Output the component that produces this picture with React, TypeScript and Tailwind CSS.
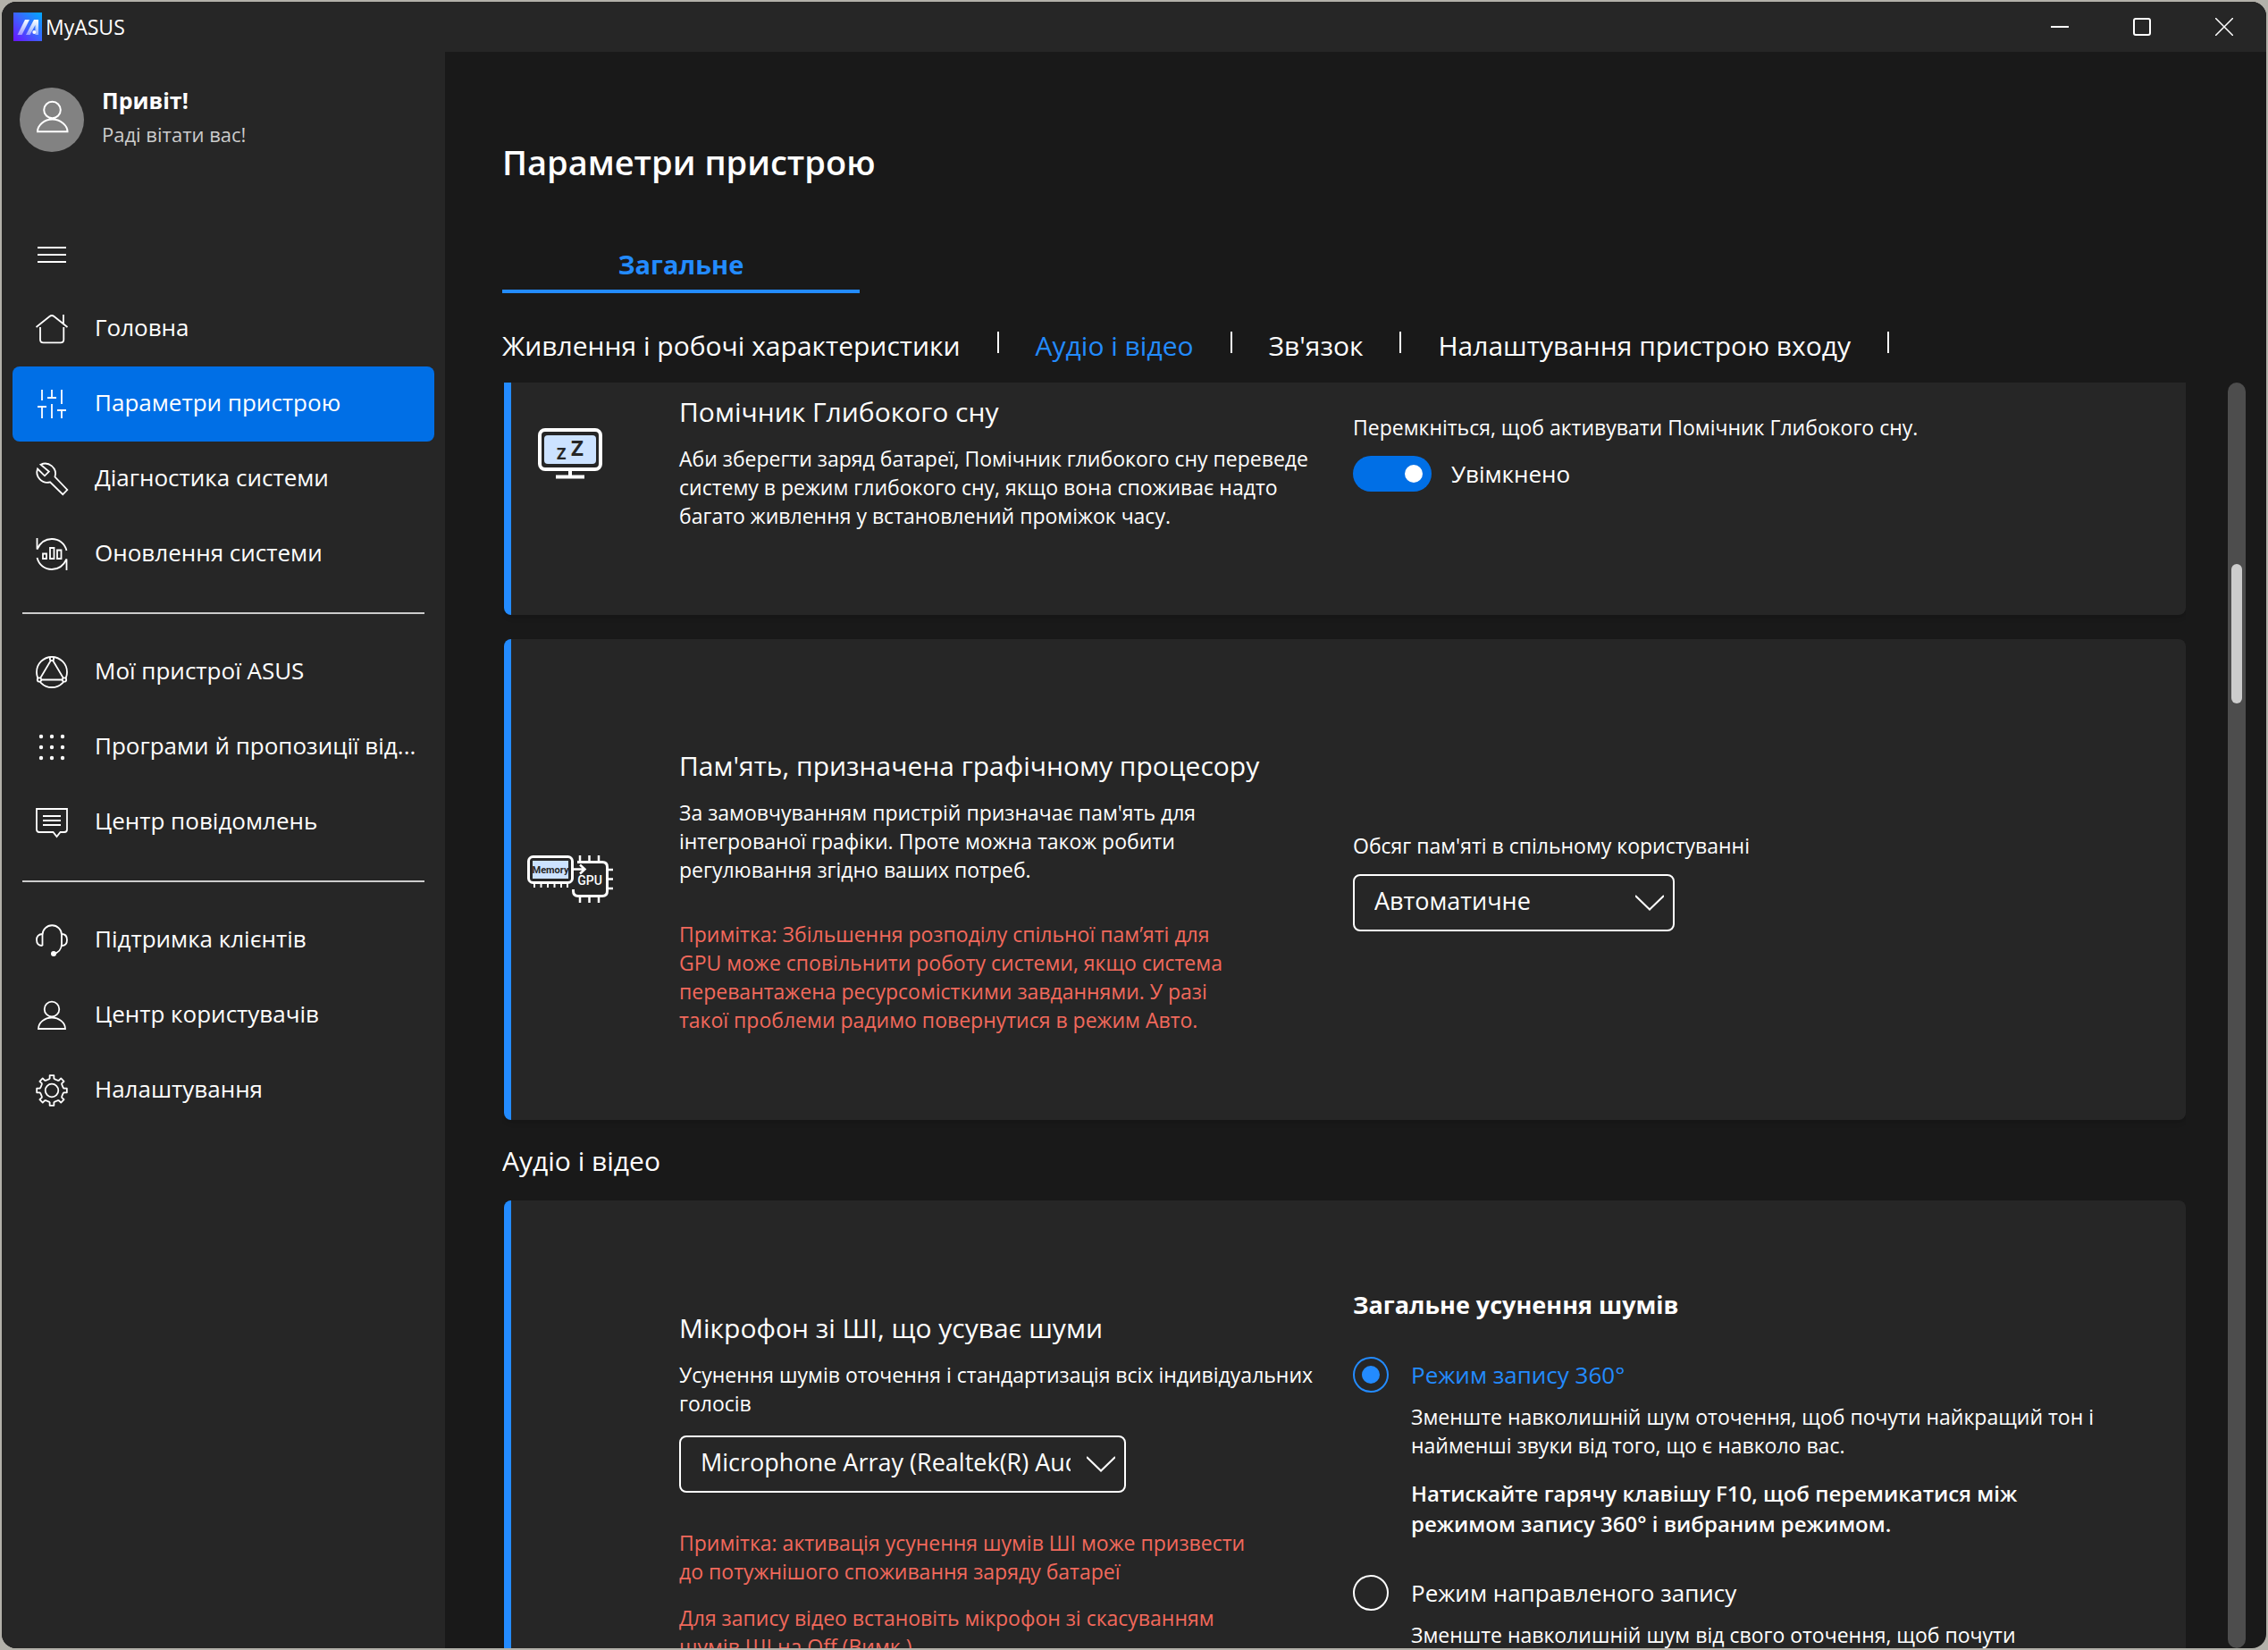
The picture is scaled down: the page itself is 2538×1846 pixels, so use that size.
import { useState } from 'react';
import type { ReactNode } from 'react';

const Icon = ({ children }: { children: ReactNode }) => (
  <svg
    viewBox="0 0 36 36"
    className="w-9 h-9 shrink-0 overflow-visible"
    fill="none"
    stroke="currentColor"
    strokeWidth="1.8"
    aria-hidden="true"
  >
    {children}
  </svg>
);

// 8 teeth, built around the 18,18 center
const gearPath = () => {
  const points: string[] = [];
  for (let i = 0; i < 8; i++) {
    const steps = [[-15, 13], [-10, 13.6], [-8, 17], [8, 17], [10, 13.6], [15, 13]];
    steps.forEach(([offset, r]) => {
      const a = ((i * 45 + offset - 90) * Math.PI) / 180;
      points.push(`${(18 + r * Math.cos(a)).toFixed(2)} ${(18 + r * Math.sin(a)).toFixed(2)}`);
    });
  }
  return `M${points.join('L')}Z`;
};

const HomeIcon = () => (
  <Icon>
    <path d="M.5 16 15.5 4Q18 2 20.5 4L35.5 16M31 2v11M5 16v14q0 3.3 3.5 3.3h19.3q3.5 0 3.5-3.3V16" />
  </Icon>
);

const SlidersIcon = () => (
  <Icon>
    <path d="M7 2v12M2 21h10M7 21v13M18 2v9M13 11h10M18 18v16M29 2v16M24 25h10M29 25v9" />
  </Icon>
);

const WrenchIcon = () => (
  <Icon>
    <path d="M5.5 1.8A11.5 11.5 0 0 1 21.5 15.5L35.3 30 30.3 35.2 16 21.3A11.5 11.5 0 0 1 2 6.5L10 14.3 14.8 9.6Z" />
  </Icon>
);

const UpdateIcon = () => (
  <Icon>
    <path d="M1.5 0v12.5C5 5 11 1 18 1c8 0 14.5 5 16.5 13M34.5 36V23.5C31 31 25 35 18 35 10 35 3.5 30 1.5 22" />
    <path d="M8 17.5h4V23H8zM16 11h4.5v12H16zM24 13.5h4.5V23H24z" />
  </Icon>
);

const DevicesIcon = () => (
  <Icon>
    <circle cx="18" cy="18" r="17" />
    <path d="M18 3 4 26.5h28Z" />
    <g className="fill-[#262626]">
      <circle cx="18" cy="3" r="2.2" />
      <circle cx="4" cy="26.5" r="2.2" />
      <circle cx="32" cy="26.5" r="2.2" />
    </g>
  </Icon>
);

const DotsIcon = () => (
  <Icon>
    <g fill="currentColor" stroke="none">
      {[6, 18, 30].map((y) => [6, 18, 30].map((x) => <circle key={`${x}-${y}`} cx={x} cy={y} r="2.2" />))}
    </g>
  </Icon>
);

const MessageIcon = () => (
  <Icon>
    <path d="M1 3h34v23q0 3-3 3h-4.5l-4 5-4-5H4q-3 0-3-3ZM8 11h20M8 16h20M8 21h20" />
  </Icon>
);

const HeadsetIcon = () => (
  <Icon>
    <path d="M7.5 24V12A10.75 10.75 0 0 1 29 12V22C29 28 25 32 20 33" />
    <path d="M7.5 11C3 11 1 14 1 17.5S3 24 7.5 24M29 11c4.5 0 6 3 6 6.5S33.5 24 29 24" />
    <circle cx="20" cy="33" r="3" fill="currentColor" stroke="none" />
  </Icon>
);

const UserIcon = () => (
  <Icon>
    <circle cx="18" cy="11" r="8.3" />
    <path d="M3 33C3 26 10 20.5 18 20.5S33 26 33 33Z" />
  </Icon>
);

const GearIcon = () => (
  <Icon>
    <path d={gearPath()} strokeLinejoin="round" />
    <circle cx="18" cy="18" r="7.3" />
  </Icon>
);

const SleepIcon = () => (
  <svg viewBox="0 0 72 57" className="w-[72px] h-[57px]" fill="none" aria-hidden="true">
    <rect x="2" y="2" width="68" height="44" rx="6" stroke="#fff" strokeWidth="4" />
    <rect x="7" y="8" width="58" height="32" rx="4" fill="#cce2ff" />
    <path d="M36 47v6M20 54.5h32" stroke="#fff" strokeWidth="4" />
    <g fontWeight="700" fill="#262626" fontFamily="Open Sans, sans-serif">
      <text x="21" y="35" fontSize="18">Z</text>
      <text x="37" y="31" fontSize="24">Z</text>
    </g>
  </svg>
);

const MemoryIcon = () => (
  <svg viewBox="0 0 96 54" className="w-24 h-[54px]" fill="none" stroke="#fff" strokeWidth="3" aria-hidden="true">
    <rect x="1.5" y="1.5" width="49" height="29" rx="5" />
    <rect x="6" y="6" width="40" height="20" fill="#cce2ff" stroke="none" />
    <path d="M8 31v5M15.5 31v5M23 31v5M30.5 31v5M38 31v5M45 31v5" strokeWidth="2" />
    <path d="M56 7.5H84q5.5 0 5.5 5.5V40q0 5.5-5.5 5.5H57q-5.5 0-5.5-5.5V38" />
    <path d="M59 0v7M69.5 0v7M80 0v7M59 46v7M69.5 46v7M80 46v7M90 16h6M90 26.5h6M90 37h6" strokeWidth="2.5" />
    <path d="M51 15.5H64M59 10.5l5.5 5-5.5 5" strokeWidth="2.5" />
    <g stroke="none" fontFamily="Roboto, sans-serif">
      <text x="26" y="20" fontSize="11" fontWeight="700" textAnchor="middle" fill="#262626">Memory</text>
      <text x="70" y="33" fontSize="14" fontWeight="500" textAnchor="middle" fill="#fff">GPU</text>
    </g>
  </svg>
);

const navGroups = [
  [
    { label: 'Головна', icon: <HomeIcon /> },
    { label: 'Параметри пристрою', icon: <SlidersIcon /> },
    { label: 'Діагностика системи', icon: <WrenchIcon /> },
    { label: 'Оновлення системи', icon: <UpdateIcon /> },
  ],
  [
    { label: 'Мої пристрої ASUS', icon: <DevicesIcon /> },
    { label: 'Програми й пропозиції від...', icon: <DotsIcon /> },
    { label: 'Центр повідомлень', icon: <MessageIcon /> },
  ],
  [
    { label: 'Підтримка клієнтів', icon: <HeadsetIcon /> },
    { label: 'Центр користувачів', icon: <UserIcon /> },
    { label: 'Налаштування', icon: <GearIcon /> },
  ],
];

const sections = ['Живлення і робочі характеристики', 'Аудіо і відео', "Зв'язок", 'Налаштування пристрою входу'];

const TitleBar = () => (
  <header className="h-14 shrink-0 flex items-center justify-between bg-[#262626]">
    <div className="flex items-center gap-1 pl-[13px]">
      <svg viewBox="0 0 32 32" className="w-8 h-8" aria-hidden="true">
        <defs>
          <linearGradient id="logo-bg" x1="0" y1="1" x2="1" y2="0">
            <stop offset="0" stopColor="#6a12ff" />
            <stop offset=".5" stopColor="#3d63ff" />
            <stop offset="1" stopColor="#00aaff" />
          </linearGradient>
          <linearGradient id="logo-stroke" x1="0" y1="0" x2="0" y2="1">
            <stop offset="0" stopColor="#fff" />
            <stop offset="1" stopColor="#fff" stopOpacity=".45" />
          </linearGradient>
        </defs>
        <path d="M0 0h32v32H0z" fill="url(#logo-bg)" />
        <path d="M13 8h5L9.5 25H4.5Z" fill="url(#logo-stroke)" />
        <path d="M23 8h5v17h-3.5V14L18.5 25H14Z" fill="url(#logo-stroke)" />
        <circle cx="23.3" cy="22" r="2" fill="#fff" />
      </svg>
      <span className="text-[23px] leading-8">MyASUS</span>
    </div>
    <div className="flex h-full pr-px">
      <button aria-label="Згорнути" className="w-[92px] h-full flex items-center justify-center">
        <svg viewBox="0 0 20 20" className="w-5 h-5" fill="none" stroke="#fff" strokeWidth="2"><path d="M0 10h20" /></svg>
      </button>
      <button aria-label="Розгорнути" className="w-[92px] h-full flex items-center justify-center">
        <svg viewBox="0 0 20 20" className="w-5 h-5" fill="none" stroke="#fff" strokeWidth="2"><rect x="1" y="1" width="18" height="18" rx="2" /></svg>
      </button>
      <button aria-label="Закрити" className="w-[92px] h-full flex items-center justify-center">
        <svg viewBox="0 0 20 20" className="w-5 h-5" fill="none" stroke="#fff" strokeWidth="1.5"><path d="M0 0l20 20M20 0 0 20" /></svg>
      </button>
    </div>
  </header>
);

const Sidebar = () => (
  <aside className="w-[496px] shrink-0 bg-[#262626]">
    <div className="flex items-start gap-5 pt-10 pl-5">
      <div className="w-[72px] h-[72px] rounded-full bg-[#828282]">
        <svg viewBox="0 0 72 72" fill="none" stroke="#fff" strokeWidth="2" aria-hidden="true">
          <circle cx="36.5" cy="25" r="9.3" />
          <path d="M20 49.3C20 42 27.5 35.5 36.5 35.5S53.5 42 53.5 49.3Z" />
        </svg>
      </div>
      <div>
        <p className="text-[25px] leading-7 font-bold">Привіт!</p>
        <p className="text-[22px] leading-[48px] text-[#cccccc]">Раді вітати вас!</p>
      </div>
    </div>

    <button aria-label="Меню" className="block ml-10 mt-[94px]">
      <svg viewBox="0 0 32 34" className="w-8 h-[34px]" stroke="#fff" strokeWidth="2"><path d="M0 9h32M0 17h32M0 25h32" /></svg>
    </button>

    <nav className="mt-6">
      {navGroups.map((group, i) => (
        <div key={i}>
          {i > 0 && <hr className="my-[23px] mx-[23px] border-0 h-[2px] bg-[#cccccc]" />}
          {group.map((item) => (
            <a
              key={item.label}
              href="#"
              className={`flex items-center gap-[30px] h-[84px] mx-3 pl-[26px] pr-2 rounded-lg text-[26px] leading-9 whitespace-nowrap ${
                item.label === 'Параметри пристрою' ? 'bg-[#006fe6]' : ''
              }`}
            >
              {item.icon}
              <span className="pb-1">{item.label}</span>
            </a>
          ))}
        </div>
      ))}
    </nav>
  </aside>
);

const Card = ({ icon, className, children }: { icon?: ReactNode; className?: string; children: ReactNode }) => (
  <section className={`flex bg-[#262626] border-l-8 border-[#238bff] shadow-md ${className}`}>
    <div className="w-[132px] mr-14 shrink-0 flex justify-center">{icon}</div>
    {children}
  </section>
);

const Select = ({ id, label, options, className }: { id: string; label?: string; options: string[]; className: string }) => (
  <div className={`relative ${className}`}>
    <select
      id={id}
      aria-label={label}
      className="appearance-none w-full h-16 pl-[22px] pr-[60px] pb-1 rounded-lg border-2 border-white bg-[#262626] text-[27px] outline-none"
    >
      {options.map((o) => (
        <option key={o}>{o}</option>
      ))}
    </select>
    <svg
      viewBox="0 0 32 18"
      className="absolute right-3 top-[23px] w-8 h-[18px] pointer-events-none"
      fill="none"
      stroke="#fff"
      strokeWidth="2"
      aria-hidden="true"
    >
      <path d="M0 1l16 15.5L32 1" />
    </svg>
  </div>
);

const App = () => {
  const [deepSleep, setDeepSleep] = useState(true);
  const [mode, setMode] = useState('360');

  const radioClass =
    "appearance-none w-10 h-10 shrink-0 rounded-full border-2 border-white grid place-content-center checked:border-[#238bff] checked:before:content-[''] checked:before:w-5 checked:before:h-5 checked:before:rounded-full checked:before:bg-[#238bff]";

  return (
    <div className="h-screen p-[2px] bg-[#b3b1aa] text-white font-['Open_Sans','Noto_Sans',sans-serif]">
      <div className="h-full flex flex-col rounded-2xl overflow-hidden bg-[#191919]">
        <TitleBar />

        <div className="flex flex-1 min-h-0">
          <Sidebar />

          <main className="flex-1 min-w-0 flex flex-col pl-16 pr-[23px] pt-[97px]">
            <h1 className="text-[38px] leading-[52px] font-semibold">Параметри пристрою</h1>

            <div role="tablist" className="mt-[69px]">
              <button
                role="tab"
                aria-selected="true"
                className="block w-[400px] h-[52px] pb-2 border-b-4 border-[#238bff] text-[#238bff] text-[29px] leading-10 font-bold"
              >
                Загальне
              </button>
            </div>

            <div className="flex mt-[39px] text-[30px] leading-10 whitespace-nowrap">
              {sections.map((s) => (
                <div key={s} className="flex">
                  <a href="#" className={s === 'Аудіо і відео' ? 'text-[#238bff]' : ''}>{s}</a>
                  <span className="w-[2px] h-6 mt-1 mx-[41px] bg-white" />
                </div>
              ))}
            </div>

            <div className="flex flex-1 min-h-0 mt-[21px]">
              <div className="flex-1 min-w-0 pl-[2px] overflow-hidden">
                {/* Deep sleep helper */}
                <Card className="h-[260px] rounded-b-lg" icon={<div className="pt-[51px]"><SleepIcon /></div>}>
                  <div className="w-[754px] shrink-0 pt-[13px] pr-8">
                    <h2 className="text-[30px] leading-10">Помічник Глибокого сну</h2>
                    <p className="mt-4 text-[23px] leading-8">
                      Аби зберегти заряд батареї, Помічник глибокого сну переведе систему в режим глибокого сну, якщо вона
                      споживає надто багато живлення у встановлений проміжок часу.
                    </p>
                  </div>
                  <div className="pt-[34px]">
                    <p className="text-[23px] leading-8">Перемкніться, щоб активувати Помічник Глибокого сну.</p>
                    <label className="flex items-center gap-[22px] mt-4 text-[26px] leading-10">
                      <input
                        type="checkbox"
                        role="switch"
                        checked={deepSleep}
                        onChange={(e) => setDeepSleep(e.target.checked)}
                        className="appearance-none flex items-center w-[88px] h-10 px-[10px] rounded-full bg-[#828282] checked:bg-[#006fe6] checked:justify-end before:content-[''] before:w-5 before:h-5 before:rounded-full before:bg-white"
                      />
                      Увімкнено
                    </label>
                  </div>
                </Card>

                {/* Memory assigned to GPU */}
                <Card className="h-[538px] mt-[27px] rounded-lg" icon={<div className="self-center"><MemoryIcon /></div>}>
                  <div className="w-[754px] shrink-0 pt-[122px] pr-[136px]">
                    <h2 className="text-[30px] leading-10 whitespace-nowrap">Пам'ять, призначена графічному процесору</h2>
                    <p className="mt-4 text-[23px] leading-8">
                      За замовчуванням пристрій призначає пам'ять для інтегрованої графіки. Проте можна також робити
                      регулювання згідно ваших потреб.
                    </p>
                    <p className="mt-10 text-[23px] leading-8 text-[#f2695c]">
                      Примітка: Збільшення розподілу спільної пам’яті для GPU може сповільнити роботу системи, якщо система
                      перевантажена ресурсомісткими завданнями. У разі такої проблеми радимо повернутися в режим Авто.
                    </p>
                  </div>
                  <div className="pt-[215px]">
                    <label htmlFor="gpu-memory" className="block text-[23px] leading-8">
                      Обсяг пам'яті в спільному користуванні
                    </label>
                    <Select id="gpu-memory" options={['Автоматичне']} className="w-[360px] mt-4" />
                  </div>
                </Card>

                <h2 className="-ml-[2px] mt-[26px] mb-6 text-[30px] leading-10">Аудіо і відео</h2>

                {/* AI noise cancelling */}
                <Card className="h-[900px] rounded-lg">
                  <div className="w-[754px] shrink-0 pt-[123px] pr-8">
                    <h2 className="text-[30px] leading-10">Мікрофон зі ШІ, що усуває шуми</h2>
                    <p className="mt-4 text-[23px] leading-8">
                      Усунення шумів оточення і стандартизація всіх індивідуальних голосів
                    </p>
                    <Select
                      id="microphone"
                      label="Мікрофон"
                      options={['Microphone Array (Realtek(R) Audio)']}
                      className="w-[500px] mt-5"
                    />
                    <p className="mt-10 pr-[76px] text-[23px] leading-8 text-[#f2695c]">
                      Примітка: активація усунення шумів ШІ може призвести до потужнішого споживання заряду батареї
                    </p>
                    <p className="mt-5 pr-[106px] text-[23px] leading-8 text-[#f2695c]">
                      Для запису відео встановіть мікрофон зі скасуванням шумів ШІ на Off (Вимк.)
                    </p>
                  </div>
                  <div className="pt-[99px] pr-20">
                    <h3 className="text-[27px] leading-9 font-bold">Загальне усунення шумів</h3>

                    <label className="flex items-center gap-[25px] mt-10 text-[26px] leading-10 text-[#238bff]">
                      <input type="radio" name="mode" checked={mode === '360'} onChange={() => setMode('360')} className={radioClass} />
                      Режим запису 360°
                    </label>
                    <div className="pl-[65px] pt-[11px]">
                      <p className="text-[23px] leading-8">
                        Зменште навколишній шум оточення, щоб почути найкращий тон і найменші звуки від того, що є навколо вас.
                      </p>
                      <p className="mt-[21px] pr-16 text-[24px] leading-[34px] font-semibold">
                        Натискайте гарячу клавішу F10, щоб перемикатися між режимом запису 360° і вибраним режимом.
                      </p>
                    </div>

                    <label className="flex items-center gap-[25px] mt-10 text-[26px] leading-10">
                      <input type="radio" name="mode" checked={mode === 'directional'} onChange={() => setMode('directional')} className={radioClass} />
                      Режим направленого запису
                    </label>
                    <div className="pl-[65px] pt-[11px]">
                      <p className="text-[23px] leading-8">Зменште навколишній шум від свого оточення, щоб почути</p>
                    </div>
                  </div>
                </Card>
              </div>

              <div className="w-5 shrink-0 ml-[47px] rounded-full bg-[#4d4d4d] pt-[203px]">
                <div className="w-3 h-[156px] mx-auto rounded-full bg-[#cdcdcd]" />
              </div>
            </div>
          </main>
        </div>
      </div>
    </div>
  );
};

export default App;
